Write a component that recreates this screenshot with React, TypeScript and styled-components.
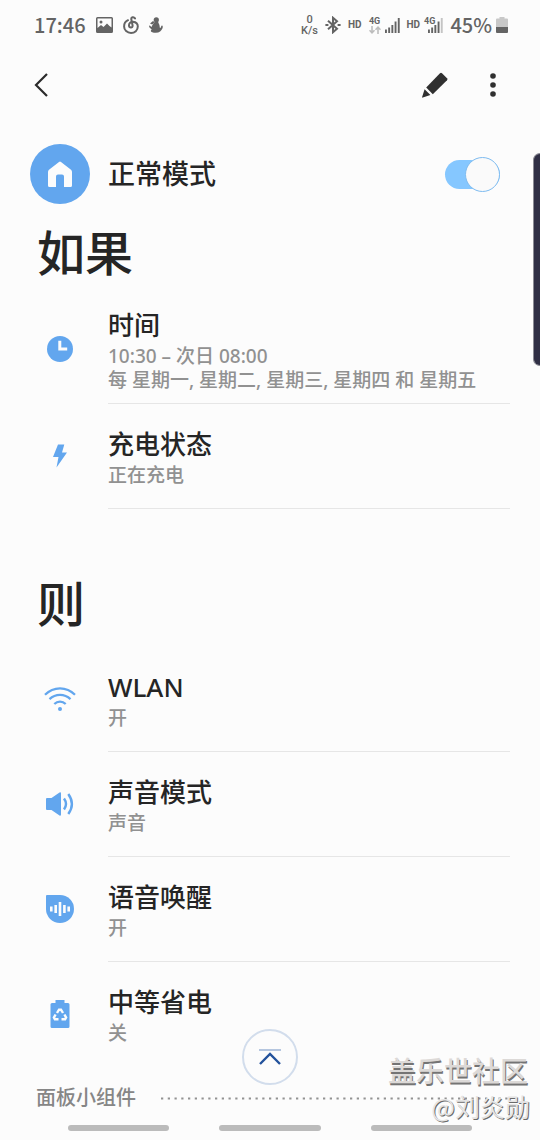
import React from "react";
import styled, { createGlobalStyle } from "styled-components";

const GlobalStyle = createGlobalStyle`
  * { box-sizing: border-box; }
  body {
    margin: 0;
    background: #fcfcfc;
    font-family: "Noto Sans", "Noto Sans CJK SC", sans-serif;
    color: #252525;
  }
  button, input { margin: 0; padding: 0; border: 0; background: none; font: inherit; }
`;

const Page = styled.div`
  position: relative;
  display: flex;
  flex-direction: column;
  min-height: 100vh;
  overflow: hidden;
`;

const StatusBar = styled.header`
  display: flex;
  align-items: center;
  justify-content: space-between;
  height: 50px;
  padding: 0 32px 0 34px;
  color: #646464;
  font-weight: 500;
`;

const StatusGroup = styled.div<{ $gap: number }>`
  display: flex;
  align-items: center;
  gap: ${(p) => p.$gap}px;
`;

const StatusText = styled.span`
  font-family: "Noto Sans CJK SC", sans-serif;
  font-size: 20px;
  line-height: 24px;
`;

const NetSpeed = styled.span`
  display: flex;
  flex-direction: column;
  align-items: center;
  font-family: Roboto, sans-serif;
  font-size: 11px;
  line-height: 11px;
`;

const Badge = styled.span`
  font-family: Roboto, sans-serif;
  font-size: 10px;
  line-height: 12px;
  font-weight: 700;
`;

const AppBar = styled.nav`
  display: flex;
  align-items: center;
  justify-content: space-between;
  height: 70px;
  padding: 0 30px 0 24px;
`;

const Actions = styled.div`
  display: flex;
  gap: 24px;
`;

const IconButton = styled.button`
  display: grid;
  place-items: center;
  width: 34px;
  height: 34px;
  cursor: pointer;
`;

const ModeRow = styled.label`
  display: flex;
  align-items: center;
  height: 108px;
  padding: 0 40px 0 30px;
`;

const ModeIcon = styled.span`
  display: grid;
  place-items: center;
  width: 60px;
  height: 60px;
  border-radius: 50%;
  background: #62a6ee;
`;

const ModeName = styled.span`
  flex: 1;
  padding-left: 18px;
  font-size: 27px;
  line-height: 36px;
  font-weight: 500;
`;

const Toggle = styled.input`
  appearance: none;
  display: flex;
  align-items: center;
  justify-content: flex-end;
  width: 55px;
  height: 29px;
  border-radius: 15px;
  background: #85c7ff;
  cursor: pointer;

  &::before {
    content: "";
    flex: none;
    width: 33px;
    height: 33px;
    border: 1px solid #7fbcf0;
    border-radius: 50%;
    background: #fafafa;
  }
  &:not(:checked) { justify-content: flex-start; background: #c8c8c8; }
`;

const Section = styled.section`
  display: flex;
  flex-direction: column;
  gap: 18px;

  & + & { margin-top: 70px; }
`;

const SectionTitle = styled.h2`
  margin: 0;
  padding-left: 37px;
  font-size: 48px;
  line-height: 50px;
  font-weight: 500;
`;

const List = styled.ul`
  margin: 0;
  padding: 0 30px 0 0;
  list-style: none;
`;

const Row = styled.li`
  display: flex;
`;

const RowIcon = styled.span`
  display: grid;
  place-items: center;
  flex: none;
  width: 108px;
  padding: 0 0 2px 12px;
`;

const RowBody = styled.div`
  display: flex;
  flex: 1;
  flex-direction: column;
  justify-content: center;
  min-height: 105px;
  padding: 14px 0 11px;
  border-bottom: 1px solid #e6e6e6;

  ${Row}:last-child & { border-bottom-color: #e6e6e6; }
  main > section:last-of-type ${Row}:last-child & { border-bottom-color: transparent; }
`;

const RowTitle = styled.h3`
  margin: 0 0 4px;
  font-size: 26px;
  line-height: 30px;
  font-weight: 500;
`;

const RowDetail = styled.p`
  margin: 0;
  color: #919191;
  font-size: 19px;
  line-height: 24px;
  font-weight: 500;
`;

const PanelHeading = styled.div`
  display: flex;
  align-items: center;
  gap: 25px;
  padding: 16px 30px 3px 36px;
  color: #868686;
  font-size: 20px;
  line-height: 30px;
  font-weight: 500;
`;

const Dots = styled.svg`
  flex: 1;
  min-width: 0;
  height: 3px;
`;

const GestureBar = styled.footer`
  display: flex;
  align-items: center;
  gap: 50px;
  height: 24px;
  margin-top: auto;
  padding: 0 68px;
`;

const GestureHint = styled.span`
  flex: 1;
  height: 6px;
  border-radius: 3px;
  background: #bbbbbb;
`;

const TopButton = styled.button`
  position: absolute;
  left: 50%;
  bottom: 55px;
  display: grid;
  place-items: center;
  width: 56px;
  height: 56px;
  margin-left: -28px;
  border: 2px solid #d2ddec;
  border-radius: 50%;
  background: #fcfcfc;
  cursor: pointer;
`;

const EdgeHandle = styled.div`
  position: absolute;
  top: 153px;
  right: 0;
  width: 7px;
  height: 213px;
  border: 1px solid #8b8b94;
  border-right: 0;
  border-radius: 7px 0 0 7px;
  background: #302f45;
`;

const Watermark = styled.div`
  position: absolute;
  right: 10px;
  bottom: 18px;
  text-align: right;
  font-family: "Noto Sans CJK SC", sans-serif;
`;

const Community = styled.div`
  padding-right: 2px;
  color: #dcd9d7;
  font-size: 28px;
  line-height: 40px;
  font-weight: 500;
  text-shadow: 1px 2px 0 #747474;
`;

const Author = styled.div`
  color: #e4e4e4;
  font-size: 25px;
  line-height: 32px;
  text-shadow: 1px 1px 0 #6a6a6a;
`;

const NetworkLabel = styled.span`
  display: flex;
  flex-direction: column;
  align-items: center;
  font-family: Roboto, sans-serif;
  font-size: 9px;
  line-height: 9px;
  font-weight: 700;
`;

const SecondNetwork = styled(NetworkLabel)`
  align-self: flex-start;
  margin-right: -11px;
`;

const SignalGroup = styled.span`
  display: flex;
  align-items: center;
  gap: 4px;
`;

const BLUE = "#62a6ee";

const PictureIcon = () => (
  <svg width="17" height="16" viewBox="0 0 17 16" fill="#646464">
    <path fillRule="evenodd" d="M1.5 0h14A1.5 1.5 0 0 1 17 1.5v13a1.5 1.5 0 0 1-1.5 1.5h-14A1.5 1.5 0 0 1 0 14.500v-13A1.500 1.500 0 0 1 1.500 0zM1.500 1.500v9.500l3.500-3 2.500 2 3.500-3.500 2.500 2.500 2 1.500V1.500z" />
    <circle cx="5" cy="5" r="1.500" />
  </svg>
);

const MusicIcon = () => (
  <svg width="16" height="18" viewBox="0 0 16 18" fill="none" stroke="#646464" strokeWidth="2" strokeLinecap="round">
    <path d="M12 2.400C10.800.7 8 1 8.300 3.300l1.300 6.200c.3 2.600-3.400 2.600-3.600.2C5.800 7.300 7.800 5.600 10 5.800c2.900.3 4.800 2.200 4.800 4.800 0 3.700-3 6.300-6.800 6.300s-6.900-2.700-6.900-6.500c0-2.900 1.500-5.100 3.900-6.200" />
  </svg>
);

const FigureIcon = () => (
  <svg width="14" height="16" viewBox="0 0 14 16" fill="#646464">
    <circle cx="7.300" cy="2.800" r="2.600" />
    <path d="M5.600 4.500h3.600c-.3 1.400 1.600 2.600 1.500 5.200 0 1.200.5 1.600 1.100.7.500-.7.300-1.800 1.200-1.900.9 0 1 1.700.4 3-1 2.200-2.900 4.300-6.600 4.300-2.800 0-4.900-.9-5-1.900 0-.8.8-1 .9-1.400C2.300 11.700.3 11 .1 9.400 0 8.400.9 8.300 1.300 9c.4.600.9.900 1.600.8C2.600 7.800 5.400 6.500 5.600 4.500z" />
    <path d="M1 6.600l3.300-2.900 1 2.300-2.200 1.400z" />
  </svg>
);

const BluetoothIcon = () => (
  <svg width="16" height="18" viewBox="0 0 16 18" fill="none" stroke="#646464" strokeWidth="2">
    <path d="M3 4.700l9 8-4 3.500V1.800l4 3.500-9 8" />
    <path d="M.4 9h3M12.600 9h3" />
  </svg>
);

const Bars = ({ dim }: { dim?: boolean }) => (
  <svg width="15" height="16" viewBox="0 0 15 16" fill="#646464">
    <rect x="0" y="12.500" width="1.900" height="3.500" />
    <rect x="3.200" y="10.500" width="1.900" height="5.500" />
    <rect x="6.400" y="8" width="1.900" height="8" />
    <rect x="9.600" y="4.500" width="1.900" height="11.500" />
    <rect x="12.800" y="1" width="1.900" height="15" fill={dim ? "#c4c4c4" : "#646464"} />
  </svg>
);

const DataArrows = () => (
  <svg width="12" height="8" viewBox="0 0 12 8" fill="none" stroke="#bdbdbd" strokeWidth="1.600">
    <path d="M3 0v6.500M.5 4.200L3 6.800l2.500-2.600M9 8V1.500M6.500 3.800L9 1.200l2.500 2.600" />
  </svg>
);

const BatteryIcon = () => (
  <svg width="12" height="16" viewBox="0 0 12 16">
    <path d="M3.500 0h5v1.500H11a1 1 0 0 1 1 1V10H0V2.500a1 1 0 0 1 1-1h2.500z" fill="#c8c8c8" />
    <path d="M0 10h12v5a1 1 0 0 1-1 1H1a1 1 0 0 1-1-1z" fill="#646464" />
  </svg>
);

const BackIcon = () => (
  <svg width="14" height="24" viewBox="0 0 14 24" fill="none" stroke="#2b2b2b" strokeWidth="2.200">
    <path d="M13 1L2 12l11 11" />
  </svg>
);

const PencilIcon = () => (
  <svg width="26" height="26" viewBox="0 0 26 26" fill="#303030">
    <path d="M4.200 15.600L18 1.200q1-1 2 0l5 5q1 1 0 2L10.800 22.200z" />
    <path d="M2.600 17.300L8.400 23 .8 25.600q-1 .2-.6-.8z" />
  </svg>
);

const MoreIcon = () => (
  <svg width="6" height="24" viewBox="0 0 6 24" fill="#303030">
    <circle cx="3" cy="3" r="2.800" />
    <circle cx="3" cy="12" r="2.800" />
    <circle cx="3" cy="21" r="2.800" />
  </svg>
);

const HomeIcon = () => (
  <svg width="24" height="26" viewBox="0 0 24 26">
    <path d="M11 1Q12 .2 13 1L23 8.800Q24 9.600 24 11v13.500q0 1.500-1.500 1.500H16V15.500q0-2-2-2h-4q-2 0-2 2V26H1.500Q0 26 0 24.500V11Q0 9.600 1 8.800z" fill="#fcfcfc" />
  </svg>
);

const ClockIcon = () => (
  <svg width="26" height="26" viewBox="0 0 26 26">
    <circle cx="13" cy="13" r="13" fill={BLUE} />
    <path d="M12.800 4.800v8.200h7.400" fill="none" stroke="#fcfcfc" strokeWidth="3" />
  </svg>
);

const BoltIcon = () => (
  <svg width="14" height="24" viewBox="0 0 14 24" fill={BLUE}>
    <path d="M5 .5h6.300L9 8.500h5L3.500 23.500l2-10.500H0z" />
  </svg>
);

const WifiIcon = () => (
  <svg width="32" height="26" viewBox="0 0 32 26" fill="none" stroke={BLUE} strokeWidth="2.300">
    <path d="M1 8.700Q7.500 2.300 16 2.300T31 8.700M5.500 13.200Q10 8.900 16 8.900t10.500 4.300M10.300 18Q12.800 15.600 16 15.600t5.700 2.400" />
    <circle cx="16" cy="23" r="2" fill={BLUE} stroke="none" />
  </svg>
);

const SoundIcon = () => (
  <svg width="28" height="24" viewBox="0 0 28 24">
    <path d="M1 6h4.500L13.500.6q1.500-.8 1.500.8v21.200q0 1.600-1.500.8L5.500 18H1q-1 0-1-1V7q0-1 1-1z" fill={BLUE} />
    <path d="M18 6.500q4 5.500 0 11M22.300 2q7.200 10 0 20" fill="none" stroke={BLUE} strokeWidth="2.400" />
  </svg>
);

const VoiceIcon = () => (
  <svg width="28" height="28" viewBox="0 0 28 28">
    <path d="M1 0h13a14 14 0 1 1-14 14V1q0-1 1-1z" fill={BLUE} />
    <path d="M5.300 11.500v5M9.700 10v8M14 7v14M18.400 10v8M22.700 11.500v5" stroke="#fcfcfc" strokeWidth="2.600" />
  </svg>
);

const BatterySaverIcon = () => (
  <svg width="20" height="28" viewBox="0 0 20 28">
    <path d="M5.500 0h9v3H18q1.500 0 1.500 1.500v22Q19.500 28 18 28H2Q.5 28 .5 26.500v-22Q.5 3 2 3h3.500z" fill={BLUE} />
    <g fill="none" stroke="#fcfcfc" strokeWidth="2.400">
      <path d="M7 13l2-3.300h2l2 3.300" />
      <path d="M5.600 14.500l-1.700 3 1 1.700h3.600" />
      <path d="M14.400 14.500l1.700 3-1 1.700h-3.600" />
    </g>
  </svg>
);

const ToTopIcon = () => (
  <svg width="22" height="16" viewBox="0 0 22 16" fill="none" strokeWidth="2">
    <path d="M0 1h22" stroke="#b5c6df" />
    <path d="M1 15L11 5l10 10" stroke="#23529c" strokeWidth="2.400" />
  </svg>
);

type Item = { icon: React.ReactNode; title: string; details: string[] };

const conditions: Item[] = [
  { icon: <ClockIcon />, title: "时间", details: ["10:30 – 次日 08:00", "每 星期一, 星期二, 星期三, 星期四 和 星期五"] },
  { icon: <BoltIcon />, title: "充电状态", details: ["正在充电"] },
];

const results: Item[] = [
  { icon: <WifiIcon />, title: "WLAN", details: ["开"] },
  { icon: <SoundIcon />, title: "声音模式", details: ["声音"] },
  { icon: <VoiceIcon />, title: "语音唤醒", details: ["开"] },
  { icon: <BatterySaverIcon />, title: "中等省电", details: ["关"] },
];

const Routine = ({ title, items }: { title: string; items: Item[] }) => (
  <Section>
    <SectionTitle>{title}</SectionTitle>
    <List>
      {items.map((item) => (
        <Row key={item.title}>
          <RowIcon>{item.icon}</RowIcon>
          <RowBody>
            <RowTitle>{item.title}</RowTitle>
            {item.details.map((line) => (
              <RowDetail key={line}>{line}</RowDetail>
            ))}
          </RowBody>
        </Row>
      ))}
    </List>
  </Section>
);

export default function App() {
  return (
    <Page lang="zh-CN">
      <GlobalStyle />
      <StatusBar>
        <StatusGroup $gap={10}>
          <StatusText>17:46</StatusText>
          <PictureIcon />
          <MusicIcon />
          <FigureIcon />
        </StatusGroup>
        <StatusGroup $gap={7}>
          <NetSpeed>
            <span>0</span>
            <span>K/s</span>
          </NetSpeed>
          <BluetoothIcon />
          <Badge>HD</Badge>
          <SignalGroup>
            <NetworkLabel>
              4G
              <DataArrows />
            </NetworkLabel>
            <Bars />
          </SignalGroup>
          <SignalGroup>
            <Badge>HD</Badge>
            <SecondNetwork>4G</SecondNetwork>
            <Bars dim />
          </SignalGroup>
          <SignalGroup>
            <StatusText>45%</StatusText>
            <BatteryIcon />
          </SignalGroup>
        </StatusGroup>
      </StatusBar>

      <AppBar>
        <IconButton aria-label="返回"><BackIcon /></IconButton>
        <Actions>
          <IconButton aria-label="编辑"><PencilIcon /></IconButton>
          <IconButton aria-label="更多选项"><MoreIcon /></IconButton>
        </Actions>
      </AppBar>

      <main>
        <ModeRow>
          <ModeIcon><HomeIcon /></ModeIcon>
          <ModeName>正常模式</ModeName>
          <Toggle type="checkbox" defaultChecked />
        </ModeRow>
        <Routine title="如果" items={conditions} />
        <Routine title="则" items={results} />
        <PanelHeading>
          面板小组件
          <Dots aria-hidden="true">
            <line x1="0" y1="1.500" x2="100%" y2="1.500" stroke="#929292" strokeWidth="2.200" strokeDasharray="2.250 4.500" />
          </Dots>
        </PanelHeading>
      </main>

      <GestureBar>
        <GestureHint />
        <GestureHint />
        <GestureHint />
      </GestureBar>

      <TopButton aria-label="回到顶部"><ToTopIcon /></TopButton>
      <EdgeHandle />
      <Watermark>
        <Community>盖乐世社区</Community>
        <Author>@刘炎勋</Author>
      </Watermark>
    </Page>
  );
}
